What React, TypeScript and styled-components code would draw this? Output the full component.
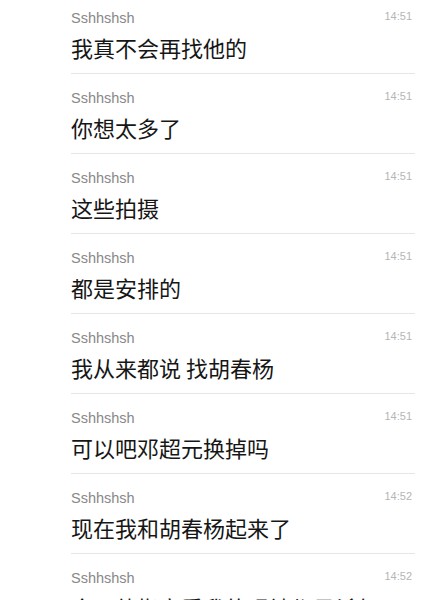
import React from 'react';
import styled, { createGlobalStyle } from 'styled-components';

const GlobalStyle = createGlobalStyle`
    html, body {
        margin: 0;
        padding: 0;
        background: #ffffff;
    }
    body {
        font-family: "Liberation Sans", "Noto Sans CJK SC", sans-serif;
    }
`;

const Page = styled.div`
    width: 431px;
    height: 600px;
    overflow: hidden;
    background: #ffffff;
`;

const List = styled.div`
    display: flex;
    flex-direction: column;
    margin: -6px 16px 0 71px;
`;

const Item = styled.div`
    display: flex;
    flex-direction: column;
    padding: 15px 0 12px 0;
    border-bottom: 1px solid #e6e6e6;
`;

const Header = styled.div`
    display: flex;
    justify-content: space-between;
    align-items: flex-start;
    height: 18px;
`;

const Name = styled.span`
    color: #888888;
    font-size: 14.5px;
    line-height: 18px;
`;

const Time = styled.span`
    color: #b5b5b5;
    font-size: 11px;
    line-height: 14px;
    margin-right: 3px;
`;

const Text = styled.div`
    margin-top: 6px;
    color: #161616;
    font-family: "Noto Sans CJK SC", sans-serif;
    font-size: 22px;
    line-height: 28px;
    white-space: nowrap;
`;

interface Message {
    name: string;
    time: string;
    text: string;
}

const messages: Message[] = [
    { name: 'Sshhshsh', time: '14:51', text: '我真不会再找他的' },
    { name: 'Sshhshsh', time: '14:51', text: '你想太多了' },
    { name: 'Sshhshsh', time: '14:51', text: '这些拍摄' },
    { name: 'Sshhshsh', time: '14:51', text: '都是安排的' },
    { name: 'Sshhshsh', time: '14:51', text: '我从来都说 找胡春杨' },
    { name: 'Sshhshsh', time: '14:51', text: '可以吧邓超元换掉吗' },
    { name: 'Sshhshsh', time: '14:52', text: '现在我和胡春杨起来了' },
    { name: 'Sshhshsh', time: '14:52', text: '今天他指定看我的眼神都是杀气' },
];

const App = () => (
    <Page>
        <GlobalStyle />
        <List>
            {messages.map((m, i) => (
                <Item key={i}>
                    <Header>
                        <Name>{m.name}</Name>
                        <Time>{m.time}</Time>
                    </Header>
                    <Text>{m.text}</Text>
                </Item>
            ))}
        </List>
    </Page>
);

export default App;
